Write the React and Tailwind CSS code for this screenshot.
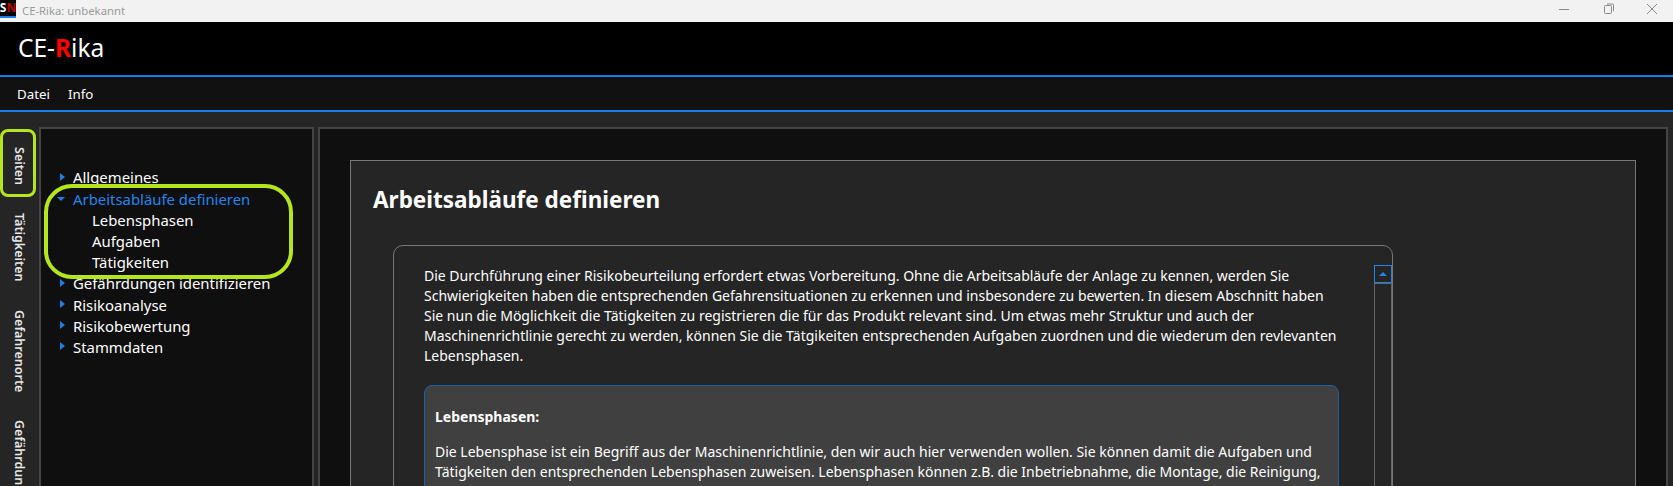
const font = "font-['Noto_Sans','Open_Sans',sans-serif]";

const intro = [
  'Die Durchführung einer Risikobeurteilung erfordert etwas Vorbereitung. Ohne die Arbeitsabläufe der Anlage zu kennen, werden Sie',
  'Schwierigkeiten haben die entsprechenden Gefahrensituationen zu erkennen und insbesondere zu bewerten. In diesem Abschnitt haben',
  'Sie nun die Möglichkeit die Tätigkeiten zu registrieren die für das Produkt relevant sind. Um etwas mehr Struktur und auch der',
  'Maschinenrichtlinie gerecht zu werden, können Sie die Tätgikeiten entsprechenden Aufgaben zuordnen und die wiederum den revlevanten',
  'Lebensphasen.',
];

const phase = [
  'Die Lebensphase ist ein Begriff aus der Maschinenrichtlinie, den wir auch hier verwenden wollen. Sie können damit die Aufgaben und',
  'Tätigkeiten den entsprechenden Lebensphasen zuweisen. Lebensphasen können z.B. die Inbetriebnahme, die Montage, die Reinigung,',
  'die Wartung oder die Außerbetriebnahme sein.',
];

function Arrow({ open }) {
  if (open) {
    return (
      <svg width="8" height="6" viewBox="0 0 8 6" className="w-2 h-[6px] -ml-[3px]">
        <path d="M0 1h8L4 5z" fill="#1f7fe0" />
      </svg>
    );
  }
  return (
    <svg width="5" height="8" viewBox="0 0 5 8" className="w-[5px] h-2 -mt-[2px]">
      <path d="M0 0l5 4-5 4z" fill="#1f7fe0" />
    </svg>
  );
}

function TreeItem({ label, open, active }) {
  return (
    <div className="h-[21.2px] flex items-center">
      <span className="w-[13px] flex justify-start items-center">
        <Arrow open={open} />
      </span>
      <span className={active ? 'text-[#2386ee]' : 'text-white'}>{label}</span>
    </div>
  );
}

function SideTab({ label, className }) {
  return (
    <div className={`[writing-mode:vertical-rl] whitespace-nowrap font-semibold text-[12.5px] text-[#e8e8e8] leading-[16px] ${className}`}>
      {label}
    </div>
  );
}

export default function App() {
  return (
    <div className={`relative w-[1673px] h-[486px] overflow-hidden flex flex-col bg-[#252525] text-white ${font}`}>
      {/* window title */}
      <div className="h-[22px] shrink-0 bg-[#f2f2f2] flex items-start">
        <div className="w-4 h-[18px] bg-black border-b-2 border-[#1f7fe0] flex items-center justify-center text-[12px] leading-none font-bold">
          <span className="text-white">S</span>
          <span className="text-[#c00000]">N</span>
        </div>
        <span className="ml-[6px] mt-[3px] text-[11.3px] leading-[16px] text-[#9a9a9a]">CE-Rika: unbekannt</span>
        <div className="ml-auto mt-[3px] flex items-center gap-[29px] pr-[15px] text-[#8a8a8a]">
          <svg width="16" height="10" viewBox="0 0 16 10"><path d="M3 5.5h10" stroke="currentColor" /></svg>
          <svg width="16" height="12" viewBox="0 0 16 12" fill="none" stroke="currentColor">
            <rect x="3.5" y="2.5" width="7" height="8" rx="1" />
            <path d="M6 1h5.5a1 1 0 0 1 1 1v6" />
          </svg>
          <svg width="12" height="12" viewBox="0 0 12 12"><path d="M1 1l10 10M11 1L1 11" stroke="currentColor" /></svg>
        </div>
      </div>

      {/* app header */}
      <div className="h-[53px] shrink-0 bg-black flex items-center pl-[18px] text-[24.5px] leading-none">
        CE-<span className="font-bold text-[#ff0000]">R</span>ika
      </div>

      {/* menu */}
      <div className="h-[37px] shrink-0 bg-[#111111] border-y-2 border-[#1780e8] flex items-center gap-[18px] pl-[17px] pt-[2px] text-[13.3px]">
        <span>Datei</span>
        <span>Info</span>
      </div>

      {/* body */}
      <div className="flex-1 min-h-0 flex pt-[15px] pr-[5px]">
        <div className="w-[38px] shrink-0 flex flex-col items-center pt-[20px]">
          <SideTab label="Seiten" />
          <SideTab label="Tätigkeiten" className="mt-[28px]" />
          <SideTab label="Gefahrenorte" className="mt-[28px]" />
          <SideTab label="Gefährdungen" className="mt-[28px]" />
        </div>

        <div className="w-[275px] ml-px shrink-0 bg-[#0f0f0f] border-2 border-b-0 border-[#444444] pt-[38px] pl-[19px] text-[14.9px]">
          <TreeItem label="Allgemeines" />
          <TreeItem label="Arbeitsabläufe definieren" open active />
          <div className="pl-[32px]">
            <div className="h-[21.2px] flex items-center">Lebensphasen</div>
            <div className="h-[21.2px] flex items-center">Aufgaben</div>
            <div className="h-[21.2px] flex items-center">Tätigkeiten</div>
          </div>
          <TreeItem label="Gefährdungen identifizieren" />
          <TreeItem label="Risikoanalyse" />
          <TreeItem label="Risikobewertung" />
          <TreeItem label="Stammdaten" />
        </div>

        <div className="flex-1 min-w-0 ml-[4px] bg-[#0f0f0f] border-2 border-b-0 border-[#444444] pt-[31px] pl-[30px] pr-[30px]">
          <div className="h-[400px] bg-[#252525] border border-[#777777] pt-[23px] pl-[22px]">
            <h1 className="text-[22.5px] leading-[32px] font-bold">Arbeitsabläufe definieren</h1>
            <div className="relative w-[1000px] h-[400px] mt-[29px] ml-[20px] border border-[#777777] rounded-[10px] pl-[30px] pt-[20px] text-[14px] leading-[20px]">
              {intro.map((line) => (
                <div key={line} className="whitespace-nowrap">{line}</div>
              ))}
              <div className="w-[915px] mt-[19px] bg-[#404040] border border-[#1f5fa8] rounded-[8px] px-[10px] pt-[21px]">
                <div className="font-bold">Lebensphasen:</div>
                <div className="mt-[15px]">
                  {phase.map((line) => (
                    <div key={line} className="whitespace-nowrap">{line}</div>
                  ))}
                </div>
              </div>
              {/* scrollbar */}
              <div className="absolute top-[19px] right-0 w-[18px] h-[380px] border-x border-[#666666]">
                <div className="-mx-px h-[18px] border border-[#1f86ee] flex items-center justify-center">
                  <svg width="8" height="4" viewBox="0 0 8 4"><path d="M0 4l4-4 4 4z" fill="#1f86ee" /></svg>
                </div>
                <div className="h-px bg-[#666666]" />
              </div>
            </div>
          </div>
        </div>
      </div>

      {/* hand drawn markers */}
      <div className="absolute left-[0px] top-[129px] w-[36px] h-[68px] border-[3px] border-[#b5e61d] rounded-[8px]" />
      <div className="absolute left-[44px] top-[184px] w-[249px] h-[95px] border-[4px] border-[#b5e61d] rounded-[28px]" />
    </div>
  );
}
